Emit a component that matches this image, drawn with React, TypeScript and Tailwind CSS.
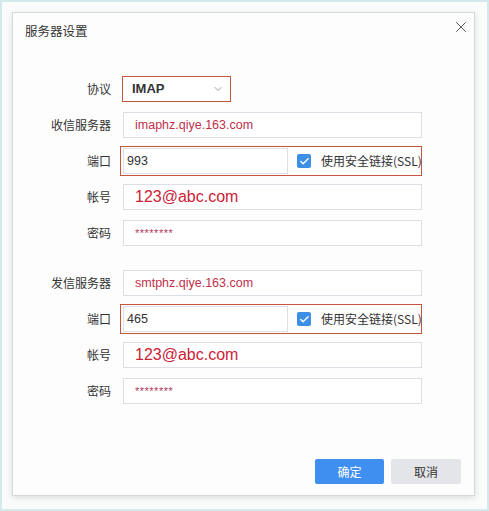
import { X, ChevronDown, Check } from "lucide-react";

const cjk = { fontFamily: '"Noto Sans CJK SC", "Liberation Sans", sans-serif' };
const latin = { fontFamily: '"Liberation Sans", Arial, "Noto Sans CJK SC", sans-serif' };

function Label({ text }: { text: string }) {
  return (
    <div className="w-[98px] shrink-0 text-right text-[12px] text-[#333]" style={cjk}>
      {text}
    </div>
  );
}

function Field({ label, value, kind }: { label: string; value: string; kind: "host" | "account" | "password" }) {
  const textCls =
    kind === "account"
      ? "text-[16px] text-[#cc2236] pl-[11px]"
      : kind === "password"
        ? "text-[11px] text-[#b03a5c] pl-[11px] tracking-[0.5px]"
        : "text-[12.5px] text-[#c0304c] pl-[11px]";
  return (
    <div className="flex h-[26px] items-center gap-[12px]">
      <Label text={label} />
      <div
        className={`flex h-[26px] w-[299px] shrink-0 items-center border border-[#dcdfe6] bg-white ${textCls}`}
        style={latin}
      >
        {value}
      </div>
    </div>
  );
}

function PortRow({ port }: { port: string }) {
  return (
    <div className="flex h-[26px] items-center gap-[12px]">
      <Label text="端口" />
      <div className="-my-[2px] ml-[-3px] flex h-[30px] w-[302px] shrink-0 items-center border border-[#c4553f] pl-[2px]">
        <div
          className="flex h-[26px] w-[165px] shrink-0 items-center border border-[#dcdfe6] bg-white pl-[3px] text-[12.5px] text-[#333]"
          style={latin}
        >
          {port}
        </div>
        <div className="ml-[9px] flex h-[14px] w-[14px] shrink-0 items-center justify-center rounded-[2px] bg-[#3d8fe6]">
          <Check className="h-[11px] w-[11px] text-white" strokeWidth={3} />
        </div>
        <span className="ml-[10px] whitespace-nowrap text-[12px] text-[#333]" style={cjk}>
          使用安全链接(SSL)
        </span>
      </div>
    </div>
  );
}

export default function App() {
  return (
    <div className="h-[511px] w-[489px] border-2 border-[#d4eaea] bg-[#fafbfb] pl-[10px] pr-[12px] pt-[10px]">
      <div className="flex h-[484px] w-[463px] flex-col border border-[#d6d8dc] bg-[#fdfdfe] shadow-[0_2px_6px_rgba(0,0,0,0.12)]">
        <div className="flex h-[36px] items-center justify-between pl-[12px] pr-[4px]">
          <span className="text-[12.5px] text-[#333]" style={cjk}>
            服务器设置
          </span>
          <X className="mb-[8px] h-[18px] w-[18px] text-[#555]" strokeWidth={1.3} />
        </div>

        <div className="mt-[27px] flex flex-col gap-[10px]">
          <div className="flex h-[26px] items-center gap-[11px]">
            <Label text="协议" />
            <div
              className="flex h-[26px] w-[109px] shrink-0 items-center justify-between border border-[#c4553f] bg-white pl-[9px] pr-[6px] text-[13px] font-semibold text-[#333]"
              style={latin}
            >
              IMAP
              <ChevronDown className="h-[12px] w-[12px] text-[#777]" strokeWidth={1.5} />
            </div>
          </div>
          <Field label="收信服务器" value="imaphz.qiye.163.com" kind="host" />
          <PortRow port="993" />
          <Field label="帐号" value="123@abc.com" kind="account" />
          <Field label="密码" value="********" kind="password" />

          <div className="mt-[14px]">
            <Field label="发信服务器" value="smtphz.qiye.163.com" kind="host" />
          </div>
          <PortRow port="465" />
          <Field label="帐号" value="123@abc.com" kind="account" />
          <Field label="密码" value="********" kind="password" />
        </div>

        <div className="mt-[55px] flex justify-end gap-[7px] pr-[13px]">
          <button
            className="h-[25px] w-[69px] rounded-[2px] bg-[#3f8ff0] text-[12px] text-white"
            style={cjk}
          >
            确定
          </button>
          <button
            className="h-[25px] w-[70px] rounded-[2px] bg-[#e4e5e8] text-[12px] text-[#333]"
            style={cjk}
          >
            取消
          </button>
        </div>
      </div>
    </div>
  );
}
